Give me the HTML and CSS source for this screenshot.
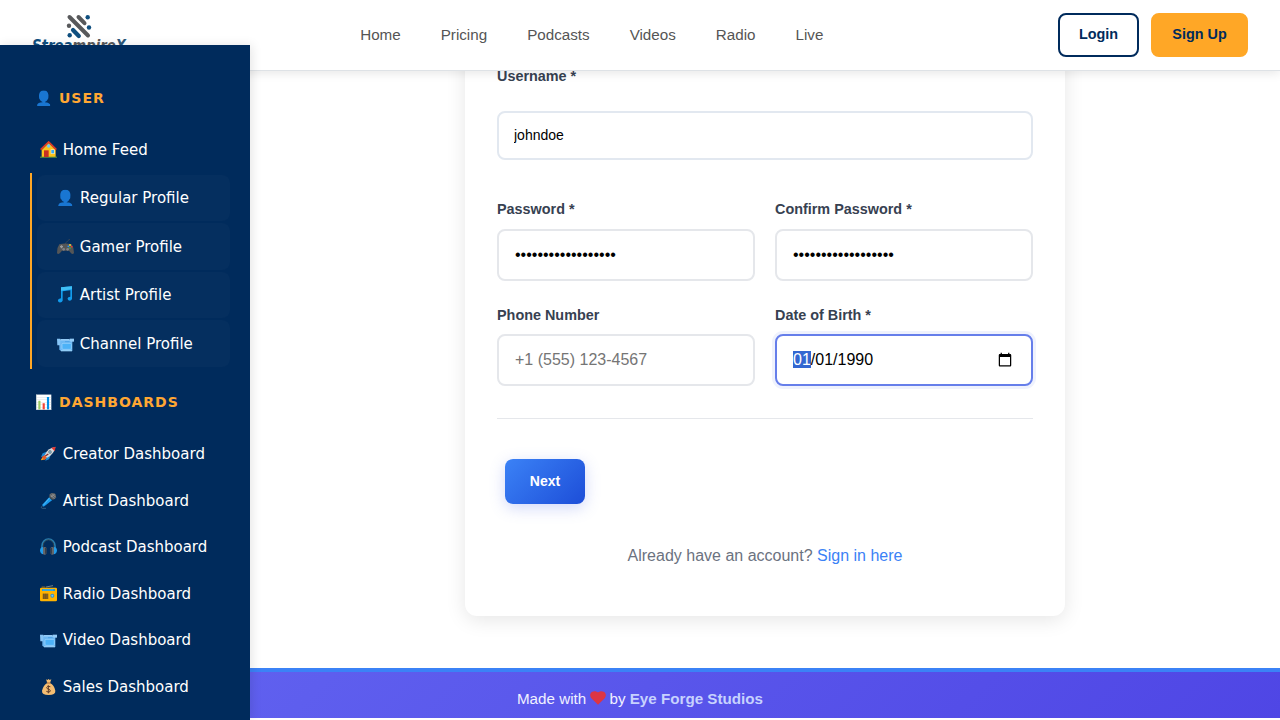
FILE: index.html
```html
<!DOCTYPE html>
<html lang="en">
<head>
<meta charset="utf-8">
<title>StreampireX</title>
<link rel="stylesheet" href="styles.css">
</head>
<body>
<svg class="defs" width="0" height="0">
  <defs>
    <symbol id="camera" viewBox="0 0 51 51">
      <path d="M7 15 H46 V48 H12 L7 44Z" fill="#6db8f3"/>
      <path d="M0 11 H10 V22 L9 31 H1Z" fill="#86c4f6"/>
      <path d="M10 12 H38 V17 H10Z" fill="#94cbf7"/>
      <rect x="15" y="25" width="28" height="18" rx="3" fill="#4db2f7" stroke="#a5d8fd" stroke-width="2"/>
      <path d="M24 20 H42" stroke="#4da3e8" stroke-width="3"/>
      <path d="M12 45 H45 V49 H12Z" fill="#90ccf7"/>
      <path d="M38 11 H51 V20 H38Z" fill="#94cbf7"/>
    </symbol>
  </defs>
</svg>
<div class="page">
  <header class="header">
    <svg class="logo" width="100" height="42" viewBox="0 0 100 42">
      <g stroke="#58595b" stroke-width="4" stroke-linecap="round">
        <path d="M39.500 9 L58 27.500"/><path d="M48.500 9 L54.500 15.200"/>
      </g>
      <path d="M43 22 L48.800 28" stroke="#0f4f7f" stroke-width="4.200" stroke-linecap="round"/>
      <g fill="#0f4f7f"><circle cx="57.700" cy="9.200" r="2.200"/><circle cx="59" cy="19.500" r="2.200"/><circle cx="39.700" cy="27.300" r="2.200"/></g>
      <circle cx="39" cy="17.800" r="2.200" fill="#58595b"/>
      <text class="logo-text" x="2" y="43" textLength="94" lengthAdjust="spacingAndGlyphs"><tspan fill="#0f4f7f">Strea</tspan><tspan fill="#58595b">mpire</tspan><tspan fill="#2b587a">X</tspan></text>
    </svg>
    <nav class="nav"><a>Home</a><a>Pricing</a><a>Podcasts</a><a>Videos</a><a>Radio</a><a>Live</a></nav>
    <div class="actions"><a class="btn login">Login</a><a class="btn signup">Sign Up</a></div>
  </header>

  <aside class="sidebar">
    <h3 class="group">👤 USER</h3>
    <a class="item home">
      <svg class="icon" viewBox="0 0 51 51">
        <path d="M5 27 L26 6 L47 27 V48 H5Z" fill="#fdc21c"/>
        <path d="M0 47 H51 V50 H0Z" fill="#689f38"/>
        <path d="M12 28 H26 V48 H12Z" fill="#c62f22"/>
        <rect x="32" y="25" width="12" height="14" fill="#fff1b0"/><rect x="34" y="27" width="8" height="10" fill="#39a9f4"/>
        <circle cx="26" cy="15" r="5" fill="#6ec9f8"/>
        <path d="M2 26 L26 3 L49 26" fill="none" stroke="#e53c25" stroke-width="5"/>
      </svg>Home Feed</a>
    <div class="profiles">
      <a class="profile"><span class="glyph">👤</span>Regular Profile</a>
      <a class="profile">
        <svg class="icon" viewBox="0 0 51 51">
          <path d="M26 20 C24 11 29 15 38 3" fill="none" stroke="#454b52" stroke-width="2.500"/>
          <path d="M7 19 Q25 14 44 19 Q51 29 51 45 Q47 51 41 44 L36 38 H15 L9 45 Q2 51 0 44 Q0 28 7 19Z" fill="#555657"/>
          <path d="M9 26 H18 M13.500 21.500 V30.500" stroke="#9a9c9e" stroke-width="4"/>
          <circle cx="20" cy="34" r="4" fill="#818386"/><circle cx="32" cy="34" r="4" fill="#818386"/>
          <circle cx="39" cy="21" r="2.800" fill="#fdd835"/><circle cx="44" cy="26" r="2.800" fill="#e53935"/><circle cx="39" cy="30" r="2.800" fill="#43a047"/><circle cx="34" cy="25" r="2.800" fill="#2196f3"/>
        </svg>Gamer Profile</a>
      <a class="profile">
        <svg class="icon" viewBox="0 0 51 51">
          <path d="M12 4 L45 1 V39 Q42 46 34 43 Q29 38 34 34 L40 32 V13 L17 16 V44 Q14 51 6 49 Q0 45 5 39 L12 37Z" fill="#129bed"/>
          <path d="M12 4 L45 1 V10 L12 14Z" fill="#40bff5"/>
        </svg>Artist Profile</a>
      <a class="profile"><svg class="icon"><use href="#camera"/></svg>Channel Profile</a>
    </div>
    <h3 class="group second">📊 DASHBOARDS</h3>
    <a class="item">
      <svg class="icon" viewBox="0 0 51 51">
        <path d="M19 20 L8 25 L3 36 L16 33Z M32 30 L27 43 L16 47 L19 35Z" fill="#1d8ad6"/>
        <path d="M14 31 L3 43 L4 46 L16 43 L21 36Z" fill="#f6a21d"/>
        <path d="M5 36 L15 31 L19 36 L14 45Z" fill="#e8562c"/>
        <path d="M14 31 Q22 9 46 6 Q42 29 21 38Z" fill="#d5d9db"/>
        <path d="M34 8 L47 5 L44 19Z" fill="#e63730"/>
        <circle cx="30" cy="21" r="5" fill="#536a78"/><circle cx="30" cy="21" r="2.500" fill="#9ddcf8"/>
        <path d="M16 33 L25 27" stroke="#8d2525" stroke-width="4"/>
      </svg>Creator Dashboard</a>
    <a class="item">
      <svg class="icon" viewBox="0 0 51 51">
        <path d="M28 15 L37 24 L11 44 L6 39Z" fill="#1999ed"/>
        <path d="M31 15 L10 40" stroke="#64c9fa" stroke-width="2"/>
        <path d="M7 42 Q0 48 7 49 H18" fill="none" stroke="#406887" stroke-width="2.500"/>
        <circle cx="38" cy="13" r="10" fill="#5c6063"/><path d="M31 8 L43 20 M36 5 L47 16 M32 15 L44 7" stroke="#a1a4a6" stroke-width="2"/>
        <path d="M28 14 L37 24" stroke="#263b4a" stroke-width="3"/>
      </svg>Artist Dashboard</a>
    <a class="item">
      <svg class="icon" viewBox="0 0 51 51">
        <path d="M6 34 V24 A19 20 0 0 1 45 24 V34" fill="none" stroke="#287eaf" stroke-width="5"/>
        <path d="M10 27 V22 A15 16 0 0 1 41 22 V27" fill="none" stroke="#34414b" stroke-width="2.500"/>
        <path d="M9 27 Q0 28 0 38 Q2 48 10 49Z M42 27 Q51 28 51 38 Q49 48 41 49Z" fill="#229be8"/>
        <rect x="9" y="27" width="10" height="23" rx="4" fill="#63666b"/><rect x="32" y="27" width="10" height="23" rx="4" fill="#63666b"/>
        <path d="M17 29 V47 M34 29 V47" stroke="#393e47" stroke-width="4"/>
      </svg>Podcast Dashboard</a>
    <a class="item">
      <svg class="icon" viewBox="0 0 51 51">
        <path d="M18 6 L39 2" stroke="#71818c" stroke-width="3"/><path d="M5 6 H16" stroke="#8a6a2c" stroke-width="3"/>
        <rect y="8" width="51" height="41" rx="4" fill="#ffb300"/>
        <rect x="6" y="12" width="39" height="6" fill="#2397d6"/><path d="M8 15 H40" stroke="#61c9f4" stroke-width="2"/>
        <path d="M8 26 H25 V42 H8Z" fill="#986a15"/><path d="M11 26 V42 M16 26 V42 M21 26 V42" stroke="#5e482a" stroke-width="2"/>
        <circle cx="37" cy="32" r="6" fill="#318fd0"/><circle cx="37" cy="32" r="3" fill="#71cdf4"/>
      </svg>Radio Dashboard</a>
    <a class="item"><svg class="icon"><use href="#camera"/></svg>Video Dashboard</a>
    <a class="item">
      <svg class="icon" viewBox="0 0 51 51">
        <path d="M18 4 L22 6 L26 3 L29 6 L34 4 L30 15 Q43 22 46 38 Q47 51 26 51 Q5 51 6 38 Q10 22 22 15Z" fill="#f4bd72"/>
        <path d="M20 15 H32" stroke="#a86b39" stroke-width="3"/>
        <path d="M31 26 Q21 22 20 29 Q21 33 27 34 Q33 36 30 41 Q26 44 19 40 M25 22 V46" fill="none" stroke="#5f3d29" stroke-width="3"/>
      </svg>Sales Dashboard</a>
  </aside>

  <main class="main">
    <form class="card">
      <label class="label" for="user">Username *</label>
      <input class="input username" id="user" type="text" value="johndoe">
      <div class="grid">
        <div class="field"><label class="label" for="pw">Password *</label><input class="input" id="pw" type="password" value="password1234567890"></div>
        <div class="field"><label class="label" for="pw2">Confirm Password *</label><input class="input" id="pw2" type="password" value="password1234567890"></div>
        <div class="field"><label class="label" for="tel">Phone Number</label><input class="input" id="tel" type="tel" placeholder="+1 (555) 123-4567"></div>
        <div class="field"><label class="label" for="dob">Date of Birth *</label><input class="input dob" id="dob" type="date" value="1990-01-01" autofocus></div>
      </div>
      <div class="next-row"><button class="next" type="button">Next</button></div>
      <p class="signin">Already have an account? <a>Sign in here</a></p>
    </form>
  </main>

  <footer class="footer"><span>Made with <svg class="heart" width="16" height="14" viewBox="0 0 16 14"><path d="M8 13.800 L1.300 7.200 C-.4 5.400-.1 2.500 1.700 1.100 C3.700-.4 6.700 0 8 1.600 C9.300 0 12.300-.4 14.300 1.100 C16.100 2.500 16.400 5.400 14.700 7.200Z" fill="#dc3545"/></svg> by <b>Eye Forge Studios</b></span></footer>
</div>
</body>
</html>
```
FILE: styles.css
```css
* { box-sizing: border-box; }
body { margin: 0; background: #fff; font-family: "Liberation Sans", Arial, sans-serif; }
.defs { display: block; height: 0; }
.page { display: grid; grid-template-columns: 250px 1fr; grid-template-rows: 45px 26px 597px 50px 2px; height: 720px; overflow: hidden; }

.header { grid-column: 1 / -1; grid-row: 1 / 3; z-index: 2; display: flex; align-items: flex-start; background: #fff; border-bottom: 1px solid #dee2e6; box-shadow: 0 2px 10px rgba(0,0,0,.1); padding: 8px 32px 0 30px; }
.logo { flex: none; overflow: visible; }
.logo-text { font: italic bold 15px "DejaVu Sans", sans-serif; }
.nav { display: flex; gap: 40px; margin: 18px 0 0 230.200px; font-size: 15.200px; line-height: 18px; color: #555; }
.actions { display: flex; gap: 12px; margin: 5px 0 0 auto; }
.btn { height: 44px; border-radius: 8px; font-size: 14.400px; font-weight: 700; line-height: 38px; text-align: center; color: #002b5c; border: 2px solid #002b5c; }
.login { width: 81px; }
.signup { width: 97px; background: #ffa726; border-color: #ffa726; }

.sidebar { grid-column: 1; grid-row: 2 / -1; z-index: 3; background: #002b5c; box-shadow: 2px 0 10px rgba(0,0,0,.1); padding: 44px 20px 0 30px; font-family: "DejaVu Sans", "Noto Color Emoji", sans-serif; color: #fff; min-height: 0; }
.group { margin: 0; padding-left: 5px; font-size: 14px; line-height: 18px; font-weight: 700; letter-spacing: 1px; word-spacing: -.3px; color: #ffa733; }
.second { margin-top: 24px; margin-bottom: 20.700px; }
.item { display: flex; align-items: center; height: 46.500px; padding-left: 10px; font-size: 15px; white-space: nowrap; }
.icon { flex: none; width: 17px; height: 17px; margin: 0 5.800px 0 0; }
.item .icon { margin-bottom: 1px; }
.home { margin-top: 20px; height: 45.500px; }
.home .icon { margin-bottom: 0; }
.profiles { height: 196px; border-left: 2px solid #ffa726; padding: 2px 0 0 5px; display: flex; flex-direction: column; gap: 2px; }
.profile { display: flex; align-items: center; height: 46.600px; padding: 1px 0 0 20px; border-radius: 8px; background: rgba(255,255,255,.02); font-size: 15px; white-space: nowrap; }
.profile .icon { margin-bottom: 1px; }
.glyph { width: 23.500px; margin-left: -.500px; }

.main { grid-column: 2; grid-row: 3; min-height: 0; }
.card { width: 600px; height: 585px; margin: -40px auto 0; padding: 36px 32px 0; border-radius: 12px; background: #fff; box-shadow: 0 4px 20px rgba(0,0,0,.1); }
.label { display: block; font-size: 14.400px; font-weight: 700; line-height: 18px; color: #374151; }
.input { display: block; width: 100%; height: 52px; margin: 0; padding: 0 16px; border: 2px solid #e5e7eb; border-radius: 8px; background: #fff; color: #000; font: 16px "Liberation Sans", Arial, sans-serif; outline: none; }
.username { height: 49px; margin-top: 26px; padding: 0 15px 2px; border-color: #e2e8f0; font-size: 14px; }
.grid { display: grid; grid-template-columns: 1fr 1fr; gap: 24px 20px; margin-top: 40px; padding-bottom: 32px; border-bottom: 1px solid #e5e7eb; }
.field .input { margin-top: 11px; }
.field:nth-child(n+3) { padding-top: 1px; }
.field:nth-child(n+3) .input { margin-top: 10px; }
.grid .dob { border-color: #667eea; box-shadow: 0 0 0 3px rgba(102,126,234,.1); }
.dob::-webkit-datetime-edit-month-field,
.dob::-webkit-datetime-edit-day-field,
.dob::-webkit-datetime-edit-year-field { padding: 0; }
.next-row { padding: 40px 8px 0; }
.next { display: block; width: 80px; height: 45px; padding: 0 0 2px; border: 0; border-radius: 8px; background: linear-gradient(135deg, #3b82f6, #1d4ed8); color: #fff; font: bold 14px "Liberation Sans", Arial, sans-serif; box-shadow: 0 4px 15px rgba(102,126,234,.3); }
.signin { margin: 42px 0 0; text-align: center; font-size: 16px; line-height: 20px; color: #6b7280; }
.signin a { color: #3b82f6; }

.footer { grid-column: 1 / -1; grid-row: 4; border-top: 4px solid #3b82f6; background: linear-gradient(135deg, #6366f1, #4f46e5); color: #f0f0ff; text-align: center; font-size: 15.200px; line-height: 18px; padding-top: 18px; }
.heart { vertical-align: -1px; margin: 0 -.6px; }
.footer b { color: #c7d2fe; }
```
